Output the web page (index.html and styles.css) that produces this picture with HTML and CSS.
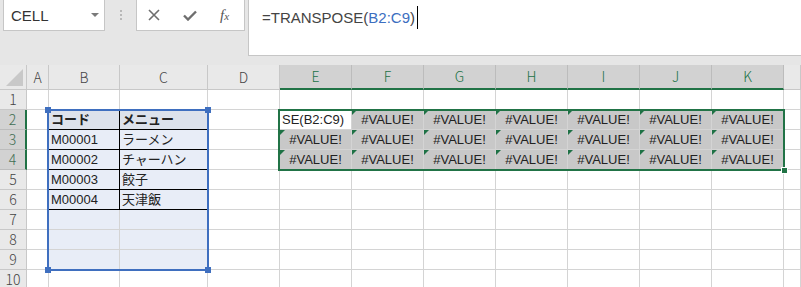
FILE: index.html
```html
<!DOCTYPE html>
<html lang="ja">
<head>
    <meta charset="UTF-8">
    <meta name="viewport" content="width=device-width, initial-scale=1.0">
    <title>TRANSPOSE</title>
    <link rel="stylesheet" href="styles.css">
</head>
<body>
    <div class="app">
        <div class="ribbon">
            <div class="namebox">CELL<span class="arrow"></span></div>
            <div class="grip"><span></span><span></span><span></span></div>
            <div class="fxbtns">
                <svg width="12" height="12" viewBox="0 0 12 12"><path d="M1 1L11 11M11 1L1 11" stroke="#6e6e6e" stroke-width="1.6" fill="none"/></svg>
                <svg width="14" height="11" viewBox="0 0 14 11"><path d="M1 5.5L5 9.5L13 1.5" stroke="#6e6e6e" stroke-width="2.4" fill="none"/></svg>
                <span class="fx">f<small>x</small></span>
            </div>
            <div class="formula">=TRANSPOSE(<span class="ref">B2:C9</span>)<span class="caret"></span></div>
        </div>

        <div class="sheet">
            <!-- column headers -->
            <div class="hd corner"></div>
            <div class="hd">A</div><div class="hd">B</div><div class="hd">C</div><div class="hd">D</div>
            <div class="hd on">E</div><div class="hd on">F</div><div class="hd on">G</div><div class="hd on">H</div>
            <div class="hd on">I</div><div class="hd on">J</div><div class="hd on">K</div><div class="hd"></div>

            <!-- row 1 -->
            <div class="rh">1</div>
            <div></div><div></div><div></div><div></div><div></div><div></div>
            <div></div><div></div><div></div><div></div><div></div><div></div>

            <!-- row 2 -->
            <div class="rh on">2</div>
            <div></div>
            <div class="tb th bk">コード</div><div class="tb th bk">メニュー</div>
            <div></div>
            <div class="act">SE(B2:C9)</div>
            <div class="er">#VALUE!</div><div class="er">#VALUE!</div><div class="er">#VALUE!</div>
            <div class="er">#VALUE!</div><div class="er">#VALUE!</div><div class="er">#VALUE!</div>
            <div></div>

            <!-- row 3 -->
            <div class="rh on">3</div>
            <div></div>
            <div class="tb bk">M00001</div><div class="tb bk">ラーメン</div>
            <div></div>
            <div class="er">#VALUE!</div><div class="er">#VALUE!</div><div class="er">#VALUE!</div><div class="er">#VALUE!</div>
            <div class="er">#VALUE!</div><div class="er">#VALUE!</div><div class="er">#VALUE!</div>
            <div></div>

            <!-- row 4 -->
            <div class="rh on">4</div>
            <div></div>
            <div class="tb bk">M00002</div><div class="tb bk">チャーハン</div>
            <div></div>
            <div class="er">#VALUE!</div><div class="er">#VALUE!</div><div class="er">#VALUE!</div><div class="er">#VALUE!</div>
            <div class="er">#VALUE!</div><div class="er">#VALUE!</div><div class="er">#VALUE!</div>
            <div></div>

            <!-- row 5 -->
            <div class="rh">5</div>
            <div></div>
            <div class="tb bk">M00003</div><div class="tb bk">餃子</div>
            <div></div><div></div><div></div><div></div><div></div><div></div><div></div><div></div><div></div>

            <!-- row 6 -->
            <div class="rh">6</div>
            <div></div>
            <div class="tb bk">M00004</div><div class="tb bk">天津飯</div>
            <div></div><div></div><div></div><div></div><div></div><div></div><div></div><div></div><div></div>

            <!-- rows 7-9 -->
            <div class="rh">7</div>
            <div></div><div class="tb"></div><div class="tb"></div>
            <div></div><div></div><div></div><div></div><div></div><div></div><div></div><div></div><div></div>

            <div class="rh">8</div>
            <div></div><div class="tb"></div><div class="tb"></div>
            <div></div><div></div><div></div><div></div><div></div><div></div><div></div><div></div><div></div>

            <div class="rh">9</div>
            <div></div><div class="tb"></div><div class="tb"></div>
            <div></div><div></div><div></div><div></div><div></div><div></div><div></div><div></div><div></div>

            <!-- row 10 -->
            <div class="rh">10</div>
            <div></div><div></div><div></div><div></div><div></div><div></div>
            <div></div><div></div><div></div><div></div><div></div><div></div>

            <!-- selections -->
            <div class="sel"><i class="tl"></i><i class="tr"></i><i class="bl"></i><i class="br"></i></div>
            <div class="arr"><i class="fill"></i></div>
        </div>
    </div>
</body>
</html>
```

FILE: styles.css
```css
* {
    box-sizing: border-box;
}
body {
    margin: 0;
    font-family: "Liberation Sans", Arial, "Noto Sans CJK JP", sans-serif;
    background: #fff;
}
.app {
    width: 801px;
    height: 287px;
    overflow: hidden;
}

/* formula bar */
.ribbon {
    height: 65px;
    background: #e6e6e6;
    display: flex;
    align-items: flex-start;
    padding-left: 3px;
}
.namebox {
    width: 102px;
    height: 31px;
    background: #fff;
    border: 1px solid #c6c6c6;
    border-top: none;
    display: flex;
    align-items: center;
    justify-content: space-between;
    padding: 0 5px 0 7px;
    font-size: 15px;
    color: #333;
}
.namebox .arrow {
    border-left: 4px solid transparent;
    border-right: 4px solid transparent;
    border-top: 4px solid #7a7a7a;
}
.grip {
    width: 31px;
    height: 30px;
    display: flex;
    flex-direction: column;
    align-items: center;
    justify-content: center;
    gap: 2px;
}
.grip span {
    width: 2px;
    height: 2px;
    background: #b8b8b8;
}
.fxbtns {
    width: 109px;
    height: 31px;
    background: #fff;
    border: 1px solid #c6c6c6;
    border-top: none;
    display: flex;
    align-items: center;
    gap: 23px;
    padding-left: 11px;
}
.fx {
    font-family: "Liberation Serif", serif;
    font-style: italic;
    font-size: 15px;
    color: #555;
}
.fx small {
    font-size: 11px;
}
.formula {
    flex: 1;
    height: 56px;
    margin-left: 3px;
    background: #fff;
    border: 1px solid #c6c6c6;
    border-top: none;
    border-right: none;
    padding: 6px 0 0 13px;
    font-size: 15px;
    line-height: 18px;
    color: #444;
}
.formula .ref {
    color: #3c6ec0;
}
.caret {
    display: inline-block;
    width: 1px;
    height: 23px;
    margin-left: 2px;
    background: #000;
    vertical-align: -6px;
}

/* grid */
.sheet {
    position: relative;
    display: grid;
    grid-template-columns: 27px 22px 71px 88px repeat(8, 72px) 1fr;
    grid-template-rows: 25px repeat(10, 20px);
    font-size: 13px;
    color: #222;
}
.sheet > div {
    border-right: 1px solid #d4d4d4;
    border-bottom: 1px solid #d4d4d4;
    white-space: nowrap;
    overflow: hidden;
    line-height: 19px;
    padding: 0 2px;
}
.sheet > .hd,
.sheet > .rh {
    background: #e9e9e9;
    border-color: #c8c8c8;
    text-align: center;
    font-family: "Noto Sans CJK JP", sans-serif;
    font-weight: 300;
    font-size: 14px;
    color: #444;
    padding: 0;
}
.sheet > .hd {
    line-height: 24px;
}
.sheet > .hd.on {
    background: #d2d2d2;
    color: #217346;
    border-bottom: 2px solid #217346;
    border-right-color: #bcbcbc;
    line-height: 23px;
}
.sheet > .rh.on {
    background: #d2d2d2;
    color: #3f6e52;
    border-right: 2px solid #217346;
    border-bottom-color: #bcbcbc;
}
.sheet > .corner {
    display: flex;
    align-items: flex-end;
    justify-content: flex-end;
    padding: 0 3px 3px 0;
}
.corner::after {
    content: '';
    border-left: 17px solid transparent;
    border-bottom: 17px solid #c8c8c8;
}

/* data */
.sheet > .tb {
    background: #e8edf7;
}
.sheet > .th {
    background: #dde2eb;
    font-weight: bold;
}
.sheet > .bk {
    border-right-color: #000;
    border-bottom-color: #000;
}
.sheet > .er {
    position: relative;
    background: #c8c8c8;
    text-align: center;
}
.er::before {
    content: '';
    position: absolute;
    top: 0;
    left: 0;
    border-top: 5px solid #1e7145;
    border-right: 5px solid transparent;
}
.sheet > .act {
    background: #fff;
}

/* selection frames */
.sheet > .sel,
.sheet > .arr {
    position: absolute;
    overflow: visible;
    padding: 0;
    z-index: 2;
}
.sheet > .sel {
    grid-column: 3 / 5;
    grid-row: 3 / 11;
    inset: -1px -1px -1px -2px;
    border: 2px solid #3f6fbf;
}
.sel i {
    position: absolute;
    width: 6px;
    height: 6px;
    background: #3f6fbf;
}
.sel .tl { left: -4px; top: -4px; }
.sel .tr { right: -4px; top: -4px; }
.sel .bl { left: -4px; bottom: -4px; }
.sel .br { right: -4px; bottom: -4px; }
.sheet > .arr {
    grid-column: 6 / 13;
    grid-row: 3 / 6;
    inset: -1px -1px -1px -2px;
    border: 2px solid #217346;
}
.arr .fill {
    position: absolute;
    right: -5px;
    bottom: -5px;
    width: 7px;
    height: 7px;
    background: #217346;
    border: 1px solid #fff;
}
```
